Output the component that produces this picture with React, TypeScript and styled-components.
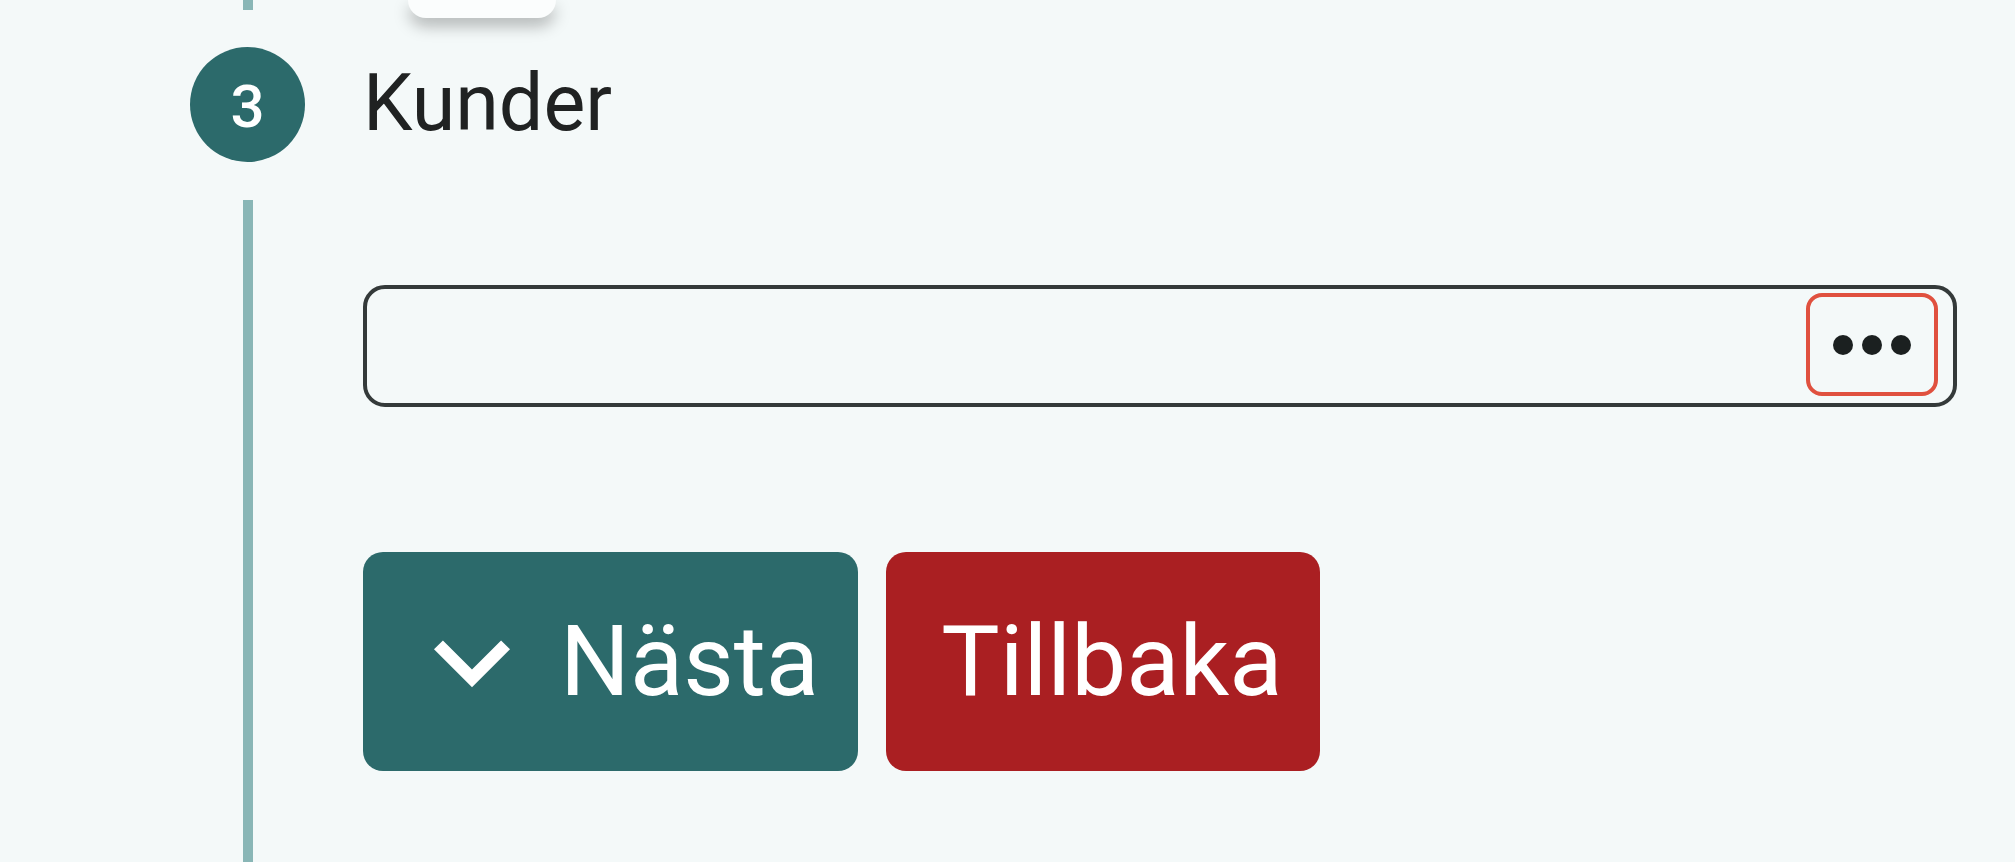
import styled, { createGlobalStyle } from "styled-components";

const GlobalStyle = createGlobalStyle`
  html, body {
    margin: 0;
    padding: 0;
    background: #f4f9f9;
    font-family: Roboto, "Liberation Sans", Arial, sans-serif;
  }
  #root {
    min-height: 100vh;
  }
`;

const TEAL = "#2c6a6b";
const RED = "#aa1f22";

const Page = styled.div`
  min-height: 100vh;
  display: flex;
  flex-direction: column;
  padding-left: 190px;
  box-sizing: border-box;
  overflow: hidden;
`;

const Row = styled.div<{ $height?: number; $grow?: boolean }>`
  display: flex;
  height: ${(p) => (p.$height ? `${p.$height}px` : "auto")};
  flex: ${(p) => (p.$grow ? 1 : "none")};
`;

const Rail = styled.div<{ $top?: number }>`
  width: 115px;
  flex: none;
  display: flex;
  flex-direction: column;
  align-items: center;
  padding-top: ${(p) => p.$top ?? 0}px;
  box-sizing: border-box;
`;

const Connector = styled.div<{ $height?: number }>`
  width: 10px;
  background: #89b6b6;
  height: ${(p) => (p.$height ? `${p.$height}px` : "auto")};
  flex: ${(p) => (p.$height ? "none" : 1)};
`;

const PrevContent = styled.div`
  margin-left: 58px;
  flex: 1;
`;

const PrevCard = styled.div`
  margin-left: 45px;
  width: 148px;
  height: 18px;
  background: #fbfdfd;
  border-radius: 0 0 22px 22px;
  box-shadow: 0 8px 16px rgba(0, 0, 0, 0.28);
`;

const Header = styled.div`
  display: flex;
  align-items: center;
  height: 115px;
`;

const StepIcon = styled.div`
  width: 115px;
  height: 115px;
  flex: none;
  border-radius: 50%;
  background: ${TEAL};
  color: #fff;
  display: flex;
  align-items: center;
  justify-content: center;
  font-size: 60px;
  font-weight: 500;
  line-height: 1;
  padding-top: 4px;
  box-sizing: border-box;
`;

const StepLabel = styled.span`
  margin-left: 58px;
  margin-bottom: 2px;
  font-size: 79px;
  line-height: 1;
  color: #202222;
`;

const Content = styled.div`
  flex: 1;
  margin-left: 58px;
  padding: 123px 58px 0 0;
`;

const Field = styled.div`
  height: 122px;
  box-sizing: border-box;
  border: 4px solid #343a3a;
  border-radius: 22px;
  display: flex;
  align-items: center;
  justify-content: flex-end;
  padding-right: 15px;
`;

const MoreButton = styled.button`
  width: 132px;
  height: 103px;
  box-sizing: border-box;
  border: 4px solid #e0513f;
  border-radius: 16px;
  background: transparent;
  display: flex;
  align-items: center;
  justify-content: center;
  padding: 0;
  margin-top: -3px;
`;

const Actions = styled.div`
  display: flex;
  gap: 28px;
  margin-top: 145px;
`;

const ActionButton = styled.button<{ $color: string; $pad: string }>`
  height: 219px;
  border: none;
  border-radius: 20px;
  background: ${(p) => p.$color};
  color: #fff;
  display: inline-flex;
  align-items: center;
  padding: ${(p) => p.$pad};
  font-family: Roboto, "Liberation Sans", Arial, sans-serif;
  font-size: 98px;
  font-weight: 400;
  line-height: 1;
  cursor: pointer;

  svg {
    margin-right: 12px;
    flex: none;
  }
`;

export default function App() {
  return (
    <>
      <GlobalStyle />
      <Page>
        <Row $height={47}>
          <Rail>
            <Connector $height={10} />
          </Rail>
          <PrevContent>
            <PrevCard />
          </PrevContent>
        </Row>

        <Header>
          <StepIcon>3</StepIcon>
          <StepLabel>Kunder</StepLabel>
        </Header>

        <Row $grow>
          <Rail $top={38}>
            <Connector />
          </Rail>
          <Content>
            <Field>
              <MoreButton aria-label="Fler">
                <svg width="80" height="22" viewBox="0 0 80 22">
                  <circle cx="11" cy="11" r="10" fill="#1b2020" />
                  <circle cx="40" cy="11" r="10" fill="#1b2020" />
                  <circle cx="69" cy="11" r="10" fill="#1b2020" />
                </svg>
              </MoreButton>
            </Field>

            <Actions>
              <ActionButton $color={TEAL} $pad="0 39px 0 33px">
                <svg width="152" height="152" viewBox="0 0 24 24">
                  <path fill="#fff" d="M16.59 8.59 12 13.17 7.41 8.59 6 10l6 6 6-6z" />
                </svg>
                Nästa
              </ActionButton>
              <ActionButton $color={RED} $pad="0 38px 0 55px">
                Tillbaka
              </ActionButton>
            </Actions>
          </Content>
        </Row>
      </Page>
    </>
  );
}
